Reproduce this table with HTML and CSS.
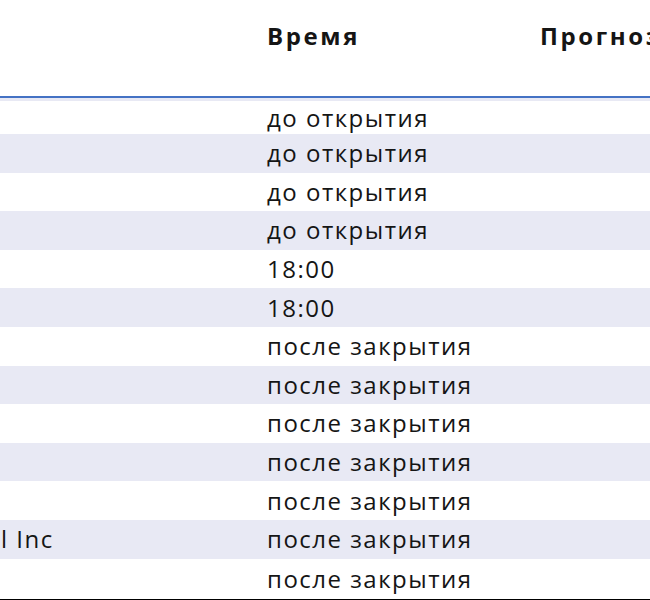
FILE: index.html
```html
<!DOCTYPE html>
<html lang="ru">
<head>
<meta charset="utf-8">
<link rel="stylesheet" href="styles.css">
</head>
<body>
<div class="table">
  <div class="row head">
    <div class="cell c1"></div>
    <div class="cell c2">Время</div>
    <div class="cell c3">Прогноз</div>
  </div>
  <div class="gap"></div>
  <div class="row first"><div class="cell c1"></div><div class="cell c2">до открытия</div><div class="cell c3"></div></div>
  <div class="row alt"><div class="cell c1"></div><div class="cell c2">до открытия</div><div class="cell c3"></div></div>
  <div class="row"><div class="cell c1"></div><div class="cell c2">до открытия</div><div class="cell c3"></div></div>
  <div class="row alt"><div class="cell c1"></div><div class="cell c2">до открытия</div><div class="cell c3"></div></div>
  <div class="row"><div class="cell c1"></div><div class="cell c2">18:00</div><div class="cell c3"></div></div>
  <div class="row alt"><div class="cell c1"></div><div class="cell c2">18:00</div><div class="cell c3"></div></div>
  <div class="row"><div class="cell c1"></div><div class="cell c2">после закрытия</div><div class="cell c3"></div></div>
  <div class="row alt"><div class="cell c1"></div><div class="cell c2">после закрытия</div><div class="cell c3"></div></div>
  <div class="row"><div class="cell c1"></div><div class="cell c2">после закрытия</div><div class="cell c3"></div></div>
  <div class="row alt"><div class="cell c1"></div><div class="cell c2">после закрытия</div><div class="cell c3"></div></div>
  <div class="row"><div class="cell c1"></div><div class="cell c2">после закрытия</div><div class="cell c3"></div></div>
  <div class="row alt"><div class="cell c1"><span class="name">l Inc</span></div><div class="cell c2">после закрытия</div><div class="cell c3"></div></div>
  <div class="row last"><div class="cell c1"></div><div class="cell c2">после закрытия</div><div class="cell c3"></div></div>
</div>
</body>
</html>
```
FILE: styles.css
```css
html, body {
  margin: 0;
  padding: 0;
  background: #ffffff;
  overflow: hidden;
}
body {
  width: 650px;
  height: 600px;
  font-family: "Open Sans", "Noto Sans", sans-serif;
  color: #151515;
}
.table {
  width: 800px;
  border-bottom: 3px solid #000000;
}
.row {
  display: grid;
  grid-template-columns: 257px 273px 270px;
  height: 38.6px;
  font-size: 24px;
  letter-spacing: 1.5px;
  line-height: 1;
}
.row.alt {
  background: #e8e9f4;
}
.row.first {
  height: 33px;
}
.row.last {
  height: 40px;
}
.cell {
  display: flex;
  align-items: center;
  padding-left: 10px;
  white-space: nowrap;
  overflow: hidden;
}
.row .c1 {
  padding-left: 0;
}
.head {
  height: 96px;
  border-bottom: 2px solid #4472c4;
  font-weight: 700;
  font-size: 24px;
  letter-spacing: 2.6px;
}
.head .cell {
  align-items: flex-start;
  padding-top: 24px;
}
.gap {
  height: 3px;
  background: #e8e9f4;
}
.name {
  margin-left: 1px;
}
```
